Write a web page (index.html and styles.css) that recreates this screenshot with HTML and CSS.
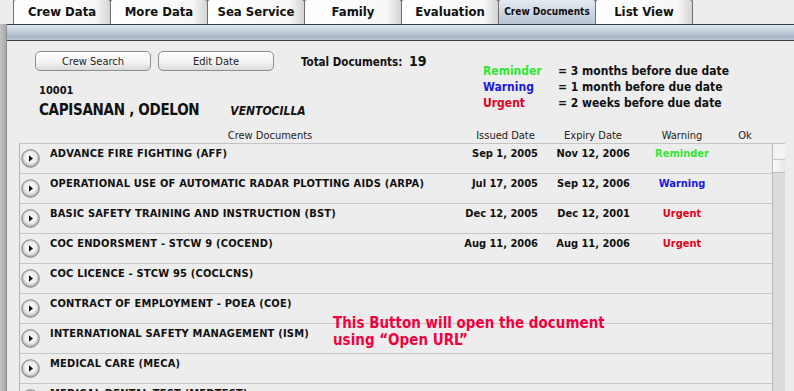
FILE: index.html
```html
<!DOCTYPE html>
<html lang="en">
<head>
    <meta charset="UTF-8">
    <title>Crew Documents</title>
    <link rel="stylesheet" href="styles.css">
</head>
<body>

<!-- Tab strip -->
<div class="tabs">
    <div class="tab">Crew Data</div>
    <div class="tab">More Data</div>
    <div class="tab">Sea Service</div>
    <div class="tab">Family</div>
    <div class="tab">Evaluation</div>
    <div class="tab active">Crew Documents</div>
    <div class="tab">List View</div>
</div>

<div class="frame">
    <div class="edge"></div>
    <div class="panel">
        <div class="bluebar"></div>

        <!-- Header: buttons, crew, totals, legend -->
        <div class="head">
            <div class="crew">
                <div class="buttons">
                    <button class="btn">Crew Search</button>
                    <button class="btn">Edit Date</button>
                </div>
                <div class="crew-id">10001</div>
                <div class="crew-name">
                    <span class="surname">CAPISANAN , ODELON</span>
                    <span class="middle">VENTOCILLA</span>
                </div>
            </div>
            <div class="total">Total Documents: <span class="total-num">19</span></div>
            <div class="legend">
                <span class="reminder">Reminder</span><span>= 3 months before due date</span>
                <span class="warning">Warning</span><span>= 1 month before due date</span>
                <span class="urgent">Urgent</span><span>= 2 weeks before due date</span>
            </div>
        </div>

        <!-- Column headers -->
        <div class="cols">
            <span></span>
            <span>Crew Documents</span>
            <span></span>
            <span>Issued Date</span>
            <span>Expiry Date</span>
            <span>Warning</span>
            <span>Ok</span>
        </div>

        <!-- Document list -->
        <div class="list">
            <div class="rows" id="rows"></div>
            <div class="scrollbar">
                <div class="sb-up"></div>
                <div class="sb-thumb"></div>
                <div class="sb-track"></div>
            </div>
            <div class="note">This Button will open the document<br>using “Open URL”</div>
        </div>
    </div>
</div>

<script>
    const docs = [
        ['ADVANCE FIRE FIGHTING (AFF)', 'Sep 1, 2005', 'Nov 12, 2006', 'Reminder'],
        ['OPERATIONAL USE OF AUTOMATIC RADAR PLOTTING AIDS (ARPA)', 'Jul 17, 2005', 'Sep 12, 2006', 'Warning'],
        ['BASIC SAFETY TRAINING AND INSTRUCTION (BST)', 'Dec 12, 2005', 'Dec 12, 2001', 'Urgent'],
        ['COC ENDORSMENT - STCW 9 (COCEND)', 'Aug 11, 2006', 'Aug 11, 2006', 'Urgent'],
        ['COC LICENCE - STCW 95 (COCLCNS)', '', '', ''],
        ['CONTRACT OF EMPLOYMENT - POEA (COE)', '', '', ''],
        ['INTERNATIONAL SAFETY MANAGEMENT (ISM)', '', '', ''],
        ['MEDICAL CARE (MECA)', '', '', ''],
        ['MEDICAL DENTAL TEST (MEDTEST)', '', '', '']
    ];

    const playIcon = '<svg width="19" height="19" viewBox="0 0 19 19">' +
        '<defs><radialGradient id="g" cx="50%" cy="45%" r="60%">' +
        '<stop offset="0" stop-color="#ffffff"/><stop offset="0.55" stop-color="#ececec"/>' +
        '<stop offset="1" stop-color="#8f8f8f"/></radialGradient></defs>' +
        '<circle cx="9.5" cy="9.5" r="8.8" fill="url(#g)" stroke="#7d7d7d" stroke-width="0.9"/>' +
        '<path d="M8 6.3 L12 9.5 L8 12.7 Z" fill="#111"/></svg>';

    const rows = document.getElementById('rows');
    docs.forEach(d => {
        const row = document.createElement('div');
        row.className = 'row';
        row.innerHTML =
            '<span class="open">' + playIcon + '</span>' +
            '<span class="doc-name">' + d[0] + '</span>' +
            '<span class="date">' + d[1] + '</span>' +
            '<span class="date">' + d[2] + '</span>' +
            '<span class="status ' + d[3].toLowerCase() + '">' + d[3] + '</span>' +
            '<span></span>';
        rows.appendChild(row);
    });
</script>

</body>
</html>
```

FILE: styles.css
```css
body {
    margin: 0;
    background-color: #ededed;
    font-family: "DejaVu Sans Condensed", "DejaVu Sans", sans-serif;
    color: #111;
    width: 794px;
    height: 391px;
    overflow: hidden;
}
/* Tabs */
.tabs {
    display: flex;
    height: 24px;
    padding-left: 13px;
}
.tab {
    width: 98px;
    margin-right: -1px;
    box-sizing: border-box;
    border: 1px solid #6e6e6e;
    border-bottom: none;
    border-radius: 3px 3px 0 0;
    background: linear-gradient(to right, #ffffff 0%, #f7f7f7 85%, #d4d4d4 100%);
    font-weight: bold;
    font-size: 13px;
    line-height: 24px;
    text-align: center;
    margin-top: -1px;
    height: 25px;
}
.tab.active {
    background: linear-gradient(to bottom, #e6ebf1, #b7c4d4);
    font-size: 10px;
}
/* Frame */
.frame {
    display: flex;
}
.edge {
    width: 6px;
    background: linear-gradient(to right, #c4c4c4, #a8a8a8);
    border-right: 1px solid #8c8c8c;
    height: 367px;
}
.panel {
    flex: 1;
}
.bluebar {
    height: 15px;
    border-top: 1px solid #33404f;
    border-bottom: 1px solid #3d3d3d;
    background: linear-gradient(to bottom, #dfe6ee 0%, #c3cedb 45%, #a6b4c6 80%, #b9c5d3 100%);
}
/* Header */
.head {
    display: flex;
    height: 78px;
    padding-top: 10px;
}
.crew {
    width: 266px;
    padding-left: 28px;
    white-space: nowrap;
}
.buttons {
    display: flex;
    gap: 7px;
}
.btn {
    width: 116px;
    height: 20px;
    border: 1px solid #8e8e8e;
    border-radius: 5px;
    background: linear-gradient(to bottom, #ffffff, #f2f2f2 60%, #dadada);
    font-family: "DejaVu Sans Condensed", "DejaVu Sans", sans-serif;
    font-size: 11px;
    color: #222;
    padding: 0;
}
.crew-id {
    margin-top: 13px;
    margin-left: 4px;
    font-size: 11px;
    font-weight: bold;
    line-height: 14px;
}
.crew-name {
    margin-top: 3px;
    margin-left: 4px;
    line-height: 18px;
    font-weight: bold;
}
.surname {
    font-size: 15px;
    letter-spacing: -0.3px;
}
.middle {
    font-size: 12px;
    font-style: italic;
    margin-left: 26px;
}
.total {
    width: 182px;
    margin-top: 1px;
    font-size: 11.5px;
    font-weight: bold;
    line-height: 18px;
}
.total-num {
    font-size: 14px;
    margin-left: 3px;
}
.legend {
    display: grid;
    grid-template-columns: 75px auto;
    align-content: start;
    margin-top: 12px;
    font-size: 12px;
    font-weight: bold;
    line-height: 16px;
}
.reminder { color: #2fe82f; }
.warning { color: #1818e0; }
.urgent { color: #e6001c; }
/* Column headers */
.cols {
    display: grid;
    grid-template-columns: 143px 240px 75px 81px 94px 84px 42px;
    height: 14px;
    font-size: 11px;
    line-height: 14px;
    text-align: center;
    color: #222;
}
/* List */
.list {
    position: relative;
    display: flex;
    margin-left: 12px;
    width: 765px;
    height: 248px;
    overflow: hidden;
    border-left: 1px solid #b4b4b4;
    border-top: 1px solid #c4c4c4;
}
.rows {
    flex: 1;
}
.row {
    display: grid;
    grid-template-columns: 30px 410px 78px 92px 104px 1fr;
    height: 30px;
    box-sizing: border-box;
    border-bottom: 1px solid #c6c6c6;
    font-size: 11px;
    font-weight: bold;
    line-height: 14px;
    white-space: nowrap;
}
.row > span {
    padding-top: 3px;
}
.row .open {
    padding-top: 5px;
    padding-left: 1px;
}
.doc-name {
    letter-spacing: 0.2px;
}
.date {
    text-align: right;
}
.status {
    text-align: center;
}
.scrollbar {
    width: 12px;
    border-left: 1px solid #b8b8b8;
    display: flex;
    flex-direction: column;
}
.sb-up {
    height: 15px;
    background: #f3f3f3;
    border-bottom: 1px solid #c8c8c8;
}
.sb-thumb {
    height: 12px;
    background: linear-gradient(to right, #fbfbfb, #e6e6e6);
    border-bottom: 1px solid #b8b8b8;
}
.sb-track {
    flex: 1;
    background-color: #eeeeee;
    background-image: radial-gradient(#c6c6c6 0.6px, transparent 0.8px);
    background-size: 2px 2px;
}
.note {
    position: absolute;
    left: 313px;
    top: 171px;
    color: #f2003f;
    font-size: 15px;
    font-weight: bold;
    line-height: 17px;
}
```
